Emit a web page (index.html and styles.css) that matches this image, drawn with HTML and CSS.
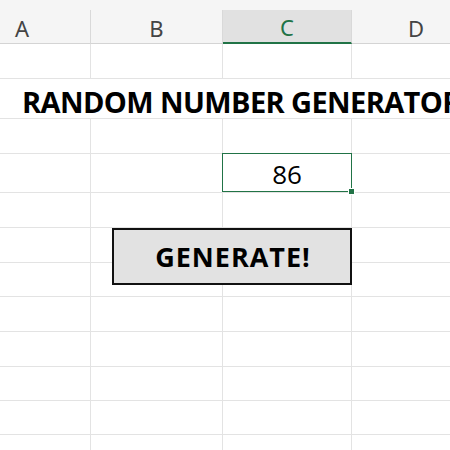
FILE: index.html
```html
<!DOCTYPE html>
<html lang="en">
<head>
  <meta charset="UTF-8" />
  <title>Random Number Generator</title>
  <link rel="stylesheet" href="styles.css">
</head>
<body>
  <div class="topbar"></div>
  <div class="sheet">
    <div class="row head">
      <div class="cell">A</div>
      <div class="cell">B</div>
      <div class="cell selected">C</div>
      <div class="cell">D</div>
    </div>
    <div class="row"><div class="cell"></div><div class="cell"></div><div class="cell"></div><div class="cell"></div></div>
    <div class="row title-row">
      <div class="cell title">RANDOM NUMBER GENERATOR</div>
    </div>
    <div class="row"><div class="cell"></div><div class="cell"></div><div class="cell"></div><div class="cell"></div></div>
    <div class="row tall">
      <div class="cell"></div><div class="cell"></div>
      <div class="cell value active">86</div>
      <div class="cell"></div>
    </div>
    <div class="row"><div class="cell"></div><div class="cell"></div><div class="cell"></div><div class="cell"></div></div>
    <div class="row"><div class="cell"></div><div class="cell"></div><div class="cell"></div><div class="cell"></div></div>
    <div class="row short"><div class="cell"></div><div class="cell"></div><div class="cell"></div><div class="cell"></div></div>
    <div class="row"><div class="cell"></div><div class="cell"></div><div class="cell"></div><div class="cell"></div></div>
    <div class="row"><div class="cell"></div><div class="cell"></div><div class="cell"></div><div class="cell"></div></div>
    <div class="row short"><div class="cell"></div><div class="cell"></div><div class="cell"></div><div class="cell"></div></div>
    <div class="row short"><div class="cell"></div><div class="cell"></div><div class="cell"></div><div class="cell"></div></div>
    <div class="row"><div class="cell"></div><div class="cell"></div><div class="cell"></div><div class="cell"></div></div>

    <button class="generate">GENERATE!</button>
  </div>
</body>
</html>
```

FILE: styles.css
```css
html, body {
  margin: 0;
  height: 100%;
  overflow: hidden;
  background: #ffffff;
  font-family: "Open Sans", "Liberation Sans", sans-serif;
}
.topbar {
  height: 10px;
  background: #f5f5f5;
}
.sheet {
  position: relative;
  margin-left: -46px;
}
.row {
  display: grid;
  grid-template-columns: 137px 132px 129px 129px;
  height: 35px;
}
.row.tall {
  height: 39px;
}
.row.short {
  height: 34px;
}
.row.title-row {
  height: 40px;
}
.cell {
  box-sizing: border-box;
  border-right: 1px solid #e3e3e3;
  border-bottom: 1px solid #e3e3e3;
}
.head {
  height: 34px;
  background: #f5f5f5;
}
.head .cell {
  display: flex;
  align-items: center;
  justify-content: center;
  padding-top: 2px;
  font-family: "Noto Sans", "Open Sans", sans-serif;
  font-size: 22px;
  color: #444444;
  border-right-color: #d9d9d9;
  border-bottom: 1px solid #d4d4d4;
}
.head .selected {
  background: #e1e1e1;
  color: #217346;
  border-bottom: 2px solid #217346;
}
.title {
  grid-column: 1 / -1;
  border-right: none;
  padding-left: 68px;
  padding-bottom: 2px;
  display: flex;
  align-items: flex-end;
  white-space: nowrap;
  font-size: 29px;
  line-height: 1;
  letter-spacing: -0.6px;
  font-weight: 700;
  color: #000000;
}
.value {
  display: flex;
  align-items: center;
  justify-content: center;
  padding-top: 1px;
  font-size: 26px;
  color: #000000;
}
.active {
  position: relative;
}
.active::after {
  content: "";
  position: absolute;
  inset: -1px -1px 0 -1px;
  border: 1.5px solid #217346;
}
.active::before {
  content: "";
  position: absolute;
  right: -4px;
  bottom: -3px;
  width: 5px;
  height: 5px;
  background: #217346;
  border: 1px solid #ffffff;
  z-index: 1;
}
.generate {
  position: absolute;
  left: 158px;
  top: 218px;
  width: 240px;
  height: 57px;
  box-sizing: border-box;
  border: 2px solid #111111;
  background: #e2e2e2;
  font-family: "Open Sans", "Liberation Sans", sans-serif;
  font-size: 27px;
  font-weight: 700;
  letter-spacing: 1px;
  color: #000000;
  padding: 0 0 0 2px;
  cursor: pointer;
}
```
